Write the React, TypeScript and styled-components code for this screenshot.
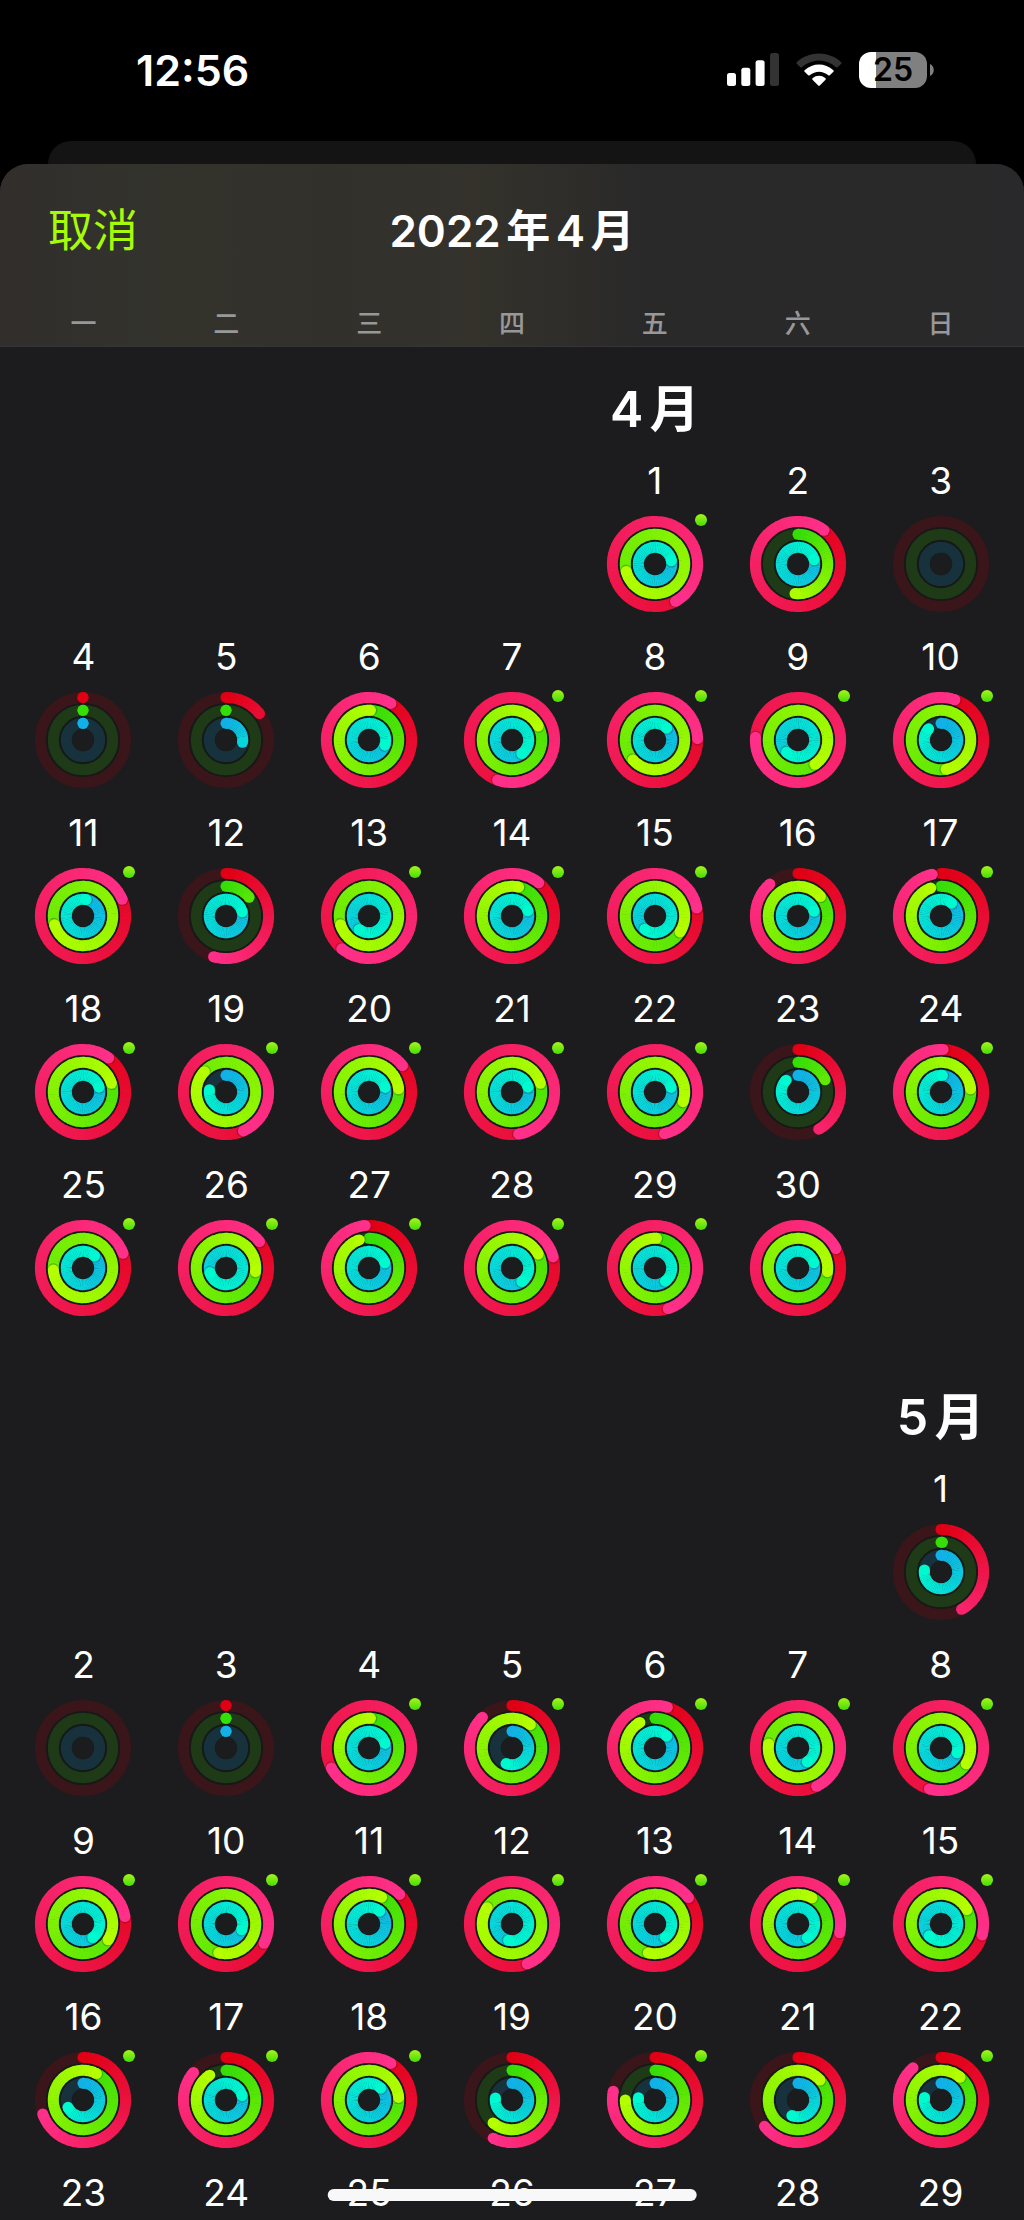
import styled, {createGlobalStyle} from 'styled-components'

type RGB = [number, number, number]

// [move, exercise, stand] as share of the goal, plus workout marker
type Day = {
	rings?: [number, number, number]
	workout?: boolean
}

type Month = {
	title: string
	// weekday column of the first day, monday = 1
	startColumn: number
	days: Day[]
}

const WEEKDAYS = ['一', '二', '三', '四', '五', '六', '日']

const day = (move: number, exercise: number, stand: number, workout = true): Day => ({
	rings: [move, exercise, stand],
	workout
})

const rest = (move: number, exercise: number, stand: number) => day(move, exercise, stand, false)

const MONTHS: Month[] = [
	{
		title: '4月',
		startColumn: 5,
		days: [
			day(1.42, 1.71, 1.22),
			rest(1.105, 0.516, 1.21),
			{},
			rest(0, 0, 0),
			rest(0.144, 0, 0.272),
			rest(1.086, 1.008, 1.3),
			day(1.555, 1.172, 1.4),
			day(1.245, 1.633, 1.125),
			day(1.76, 1.403, 1.62),
			day(1.053, 1.472, 0.867),
			day(1.186, 1.703, 1.03),
			rest(0.547, 0.142, 1.21),
			day(1.61, 1.703, 1.6),
			day(1.108, 1.036, 1.2),
			day(1.22, 1.34, 1.605),
			rest(0.885, 1.136, 1.205),
			day(0.967, 0.944, 1.11),
			day(1.103, 1.203, 1.203),
			day(1.433, 1.87, 0.772),
			day(1.144, 1.233, 1.206),
			day(1.475, 1.203, 1.203),
			day(1.464, 1.303, 1.206),
			rest(0.419, 0.183, 0.875),
			day(1.008, 1.233, 1.014),
			day(1.194, 1.739, 1.122),
			day(1.144, 1.27, 1.706),
			day(0.986, 0.947, 1.2),
			day(1.208, 1.172, 1.4),
			day(1.45, 1.008, 1.394),
			rest(1.175, 1.27, 1.2)
		]
	},
	{
		title: '5月',
		startColumn: 7,
		days: [
			rest(0.42, 0.008, 0.77),
			{},
			rest(0, 0, 0),
			day(1.672, 1.008, 1.206),
			day(0.878, 1.106, 0.558),
			day(1.047, 0.915, 1.125),
			day(1.428, 1.772, 1.406),
			day(1.544, 1.339, 1.297),
			day(1.222, 1.339, 1.4),
			day(1.325, 1.539, 1.306),
			day(1.128, 1.07, 1.111),
			day(1.442, 1.842, 1.533),
			day(1.144, 1.536, 1.397),
			day(1.283, 1.078, 1.406),
			day(1.292, 1.17, 1.625),
			day(0.697, 1.075, 0.678),
			day(0.862, 0.908, 1.208),
			day(1.086, 1.236, 1.125),
			rest(0.573, 0.61, 0.77),
			day(0.783, 0.75, 0.772),
			rest(0.644, 1.133, 0.56),
			day(0.886, 1.111, 0.775),
			{}, {}, {}, {}, {}, {}, {}
		]
	}
]

const RINGS: {radius: number, from: RGB, to: RGB, track: string}[] = [
	{radius: 42.6, from: [224, 0, 20], to: [255, 48, 138], track: '#3a151a'},
	{radius: 29.7, from: [54, 222, 8], to: [180, 255, 0], track: '#1f3a17'},
	{radius: 16.7, from: [18, 176, 230], to: [0, 250, 208], track: '#17323c'}
]

const STROKE = 11
const CENTER = 48
const STEP = 6

function mix(from: RGB, to: RGB, t: number) {
	return `rgb(${from.map((c, i) => Math.round(c + (to[i] - c) * t)).join(',')})`
}

function point(radius: number, degrees: number) {
	const rad = degrees * Math.PI / 180
	return [
		(CENTER + radius * Math.sin(rad)).toFixed(2),
		(CENTER - radius * Math.cos(rad)).toFixed(2)
	]
}

type RingProps = {
	radius: number
	from: RGB
	to: RGB
	value: number
}

function Ring({radius, from, to, value}: RingProps) {
	const end = value * 360
	// past one full turn only the last lap is visible
	const start = Math.max(0, end - 360)
	// a short arc never gets to the bright end of the gradient
	const range = Math.min(1, value * 1.8)
	const segments = []

	for (let a = start; a < end; a += STEP) {
		const b = Math.min(a + STEP, end)
		const [x1, y1] = point(radius, a)
		const [x2, y2] = point(radius, Math.min(b + 1, end))
		segments.push(
			<path
				key={a}
				d={`M${x1} ${y1}A${radius} ${radius} 0 0 1 ${x2} ${y2}`}
				stroke={mix(from, to, (a + b) / 2 / end * range)}
				strokeWidth={STROKE}
				fill="none"
			/>
		)
	}

	const [sx, sy] = point(radius, 0)
	const [ex, ey] = point(radius, end)
	const [shadowX, shadowY] = point(radius, end + 80 / radius)

	return <g>
		{value < 1 && <circle cx={sx} cy={sy} r={STROKE / 2} fill={mix(from, to, 0)} />}
		{segments}
		{value > 0.9 && <circle cx={shadowX} cy={shadowY} r={STROKE / 2} fill="#000" opacity={0.2} />}
		<circle cx={ex} cy={ey} r={STROKE / 2} fill={mix(from, to, range)} />
	</g>
}

function ActivityRings({rings, workout}: Day) {
	return <RingsSvg viewBox="0 0 96 96" aria-hidden="true">
		<circle cx={CENTER} cy={CENTER} r={46} fill="#151917" />
		<circle cx={CENTER} cy={CENTER} r={11} fill="#1a1c1e" />
		{RINGS.map(({track, ...ring}, i) => <g key={i}>
			<circle cx={CENTER} cy={CENTER} r={ring.radius} stroke={track} strokeWidth={STROKE} fill="none" />
			{rings && <Ring {...ring} value={rings[i]} />}
		</g>)}
		{workout && <circle cx={94} cy={4} r={6} fill="url(#workout)" />}
	</RingsSvg>
}

function StatusIcons() {
	return <Status>
		<svg width="52" height="34" viewBox="0 0 52 34" fill="#fff">
			<rect x="0" y="20" width="9" height="13" rx="2.5" />
			<rect x="14.3" y="14.7" width="9" height="18.3" rx="2.5" />
			<rect x="28.6" y="7.3" width="9" height="25.7" rx="2.5" />
			<rect x="43" y="0" width="9" height="33" rx="2.5" fill="#333" />
		</svg>
		<svg width="46" height="34" viewBox="0 0 46 34" fill="#fff">
			<path d="M.8 9.2C13.5-2.3 32.5-2.3 45.2 9.2Q46 10 45.2 10.8L41.7 14.2Q41 14.8 40.2 14.2C30 5.2 16 5.2 5.8 14.2Q5 14.8 4.3 14.2L.8 10.8Q0 10 .8 9.2Z" fill="#333" />
			<path d="M8.6 17.2C17 9.5 29 9.5 37.4 17.2Q38.2 18 37.4 18.8L33.8 22.3Q33.1 22.9 32.3 22.3C26.5 17.6 19.5 17.6 13.7 22.3Q12.9 22.9 12.2 22.3L8.6 18.8Q7.8 18 8.6 17.2Z" />
			<path d="M16.5 25.2C20.3 21.9 25.7 21.9 29.5 25.2Q30.3 26 29.5 26.8L23.8 32.5Q23 33.3 22.2 32.5L16.5 26.8Q15.7 26 16.5 25.2Z" />
		</svg>
		<Battery>
			<BatteryBody>25</BatteryBody>
			<svg width="4" height="12" viewBox="0 0 4 12">
				<path d="M0 0C5 2 5 10 0 12Z" fill="#808080" />
			</svg>
		</Battery>
	</Status>
}

export default function App() {
	return <Screen>
		<GlobalStyle />
		<Defs width="0" height="0" aria-hidden="true">
			<linearGradient id="workout" x1="0" y1="0" x2="0" y2="1">
				<stop offset="0" stopColor="#a4f51e" />
				<stop offset="1" stopColor="#48dc04" />
			</linearGradient>
		</Defs>
		<StatusBar>
			<Time>12:56</Time>
			<StatusIcons />
		</StatusBar>
		<BackSheet />
		<Sheet>
			<Header>
				<NavBar>
					<Cancel type="button">取消</Cancel>
					<Title>2022年4月</Title>
				</NavBar>
				<Weekdays>
					{WEEKDAYS.map(name => <span key={name}>{name}</span>)}
				</Weekdays>
			</Header>
			<Calendar>
				{MONTHS.map(month => <section key={month.title}>
					<Week>
						<MonthTitle $column={month.startColumn}>{month.title}</MonthTitle>
					</Week>
					<Week>
						{month.days.map((d, i) => <DayCell key={i} type="button" $column={i === 0 ? month.startColumn : undefined}>
							<DayNumber>{i + 1}</DayNumber>
							<ActivityRings {...d} />
						</DayCell>)}
					</Week>
				</section>)}
			</Calendar>
		</Sheet>
		<HomeIndicator />
	</Screen>
}

const GlobalStyle = createGlobalStyle`
	* {
		box-sizing: border-box;
	}

	body {
		margin: 0;
		background: #000;
		color: #fff;
		font-family: Inter, 'Noto Sans CJK SC', sans-serif;
	}

	button {
		border: 0;
		padding: 0;
		background: none;
		color: inherit;
		font: inherit;
		cursor: pointer;
	}
`

const Screen = styled.div`
	display: flex;
	flex-direction: column;
	height: 100vh;
	overflow: hidden;
`

const Defs = styled.svg`
	position: absolute;
`

const StatusBar = styled.div`
	display: flex;
	flex: none;
	align-items: center;
	justify-content: space-between;
	height: 141px;
	padding: 0 90px 2px 136px;
`

const Time = styled.div`
	font-size: 43px;
	font-weight: 600;
`

const Status = styled.div`
	display: flex;
	align-items: center;
	gap: 17px;
`

const Battery = styled.div`
	display: flex;
	align-items: center;
	gap: 3px;
`

const BatteryBody = styled.div`
	width: 68px;
	border-radius: 12px;
	background: linear-gradient(to right, #fff 25%, #808080 25%);
	color: #000;
	font-size: 32px;
	font-weight: 600;
	line-height: 36px;
	text-align: center;
`

const BackSheet = styled.div`
	flex: none;
	height: 23px;
	margin: 0 48px;
	border-radius: 23px 23px 0 0;
	background: #141415;
`

const Sheet = styled.main`
	display: flex;
	flex: 1;
	flex-direction: column;
	min-height: 0;
	border-radius: 28px 28px 0 0;
	background: #1c1c1e;
	overflow: hidden;
`

const Header = styled.header`
	flex: none;
	border-bottom: 1px solid #353537;
	background: linear-gradient(to right, #312e2c, #33332c 16%, #32302b 32%, #34322b 46%, #292929 63%, #29292b);
`

const NavBar = styled.div`
	display: grid;
	grid-template-columns: 1fr auto 1fr;
	align-items: center;
	height: 127px;
	padding: 0 48px;
`

const Cancel = styled.button`
	justify-self: start;
	color: #a6fa0a;
	font-size: 45px;
`

const Title = styled.h1`
	margin: 0;
	font-size: 44px;
	font-weight: 600;
	text-autospace: normal;
`

const Weekdays = styled.div`
	display: grid;
	grid-template-columns: repeat(7, 1fr);
	padding: 10px 12px 0;
	color: #98989a;
	font-size: 26px;
	font-weight: 500;
	line-height: 45px;
	text-align: center;
`

const Calendar = styled.div`
	display: flex;
	flex: 1;
	flex-direction: column;
	gap: 16px;
	min-height: 0;
	padding: 32px 12px 0;
	overflow-y: auto;
	scrollbar-width: none;

	section + section {
		padding-top: 32px;
	}
`

const Week = styled.div`
	display: grid;
	grid-template-columns: repeat(7, 1fr);
`

const MonthTitle = styled.h2<{$column: number}>`
	grid-column: ${props => props.$column};
	margin: 0 0 20px;
	font-size: 50px;
	font-weight: 600;
	line-height: 60px;
	text-align: center;
	text-autospace: normal;
`

const DayCell = styled.button<{$column?: number}>`
	display: flex;
	flex-direction: column;
	align-items: center;
	gap: 13px;
	grid-column: ${props => props.$column ?? 'auto'};
	padding-bottom: 23px;
`

const DayNumber = styled.span`
	font-size: 37px;
	line-height: 44px;
`

const RingsSvg = styled.svg`
	width: 96px;
	height: 96px;
	overflow: visible;
`

const HomeIndicator = styled.div`
	position: fixed;
	bottom: 19px;
	left: 50%;
	width: 36%;
	height: 12px;
	border-radius: 6px;
	background: #f8f8f8;
	transform: translateX(-50%);
`
